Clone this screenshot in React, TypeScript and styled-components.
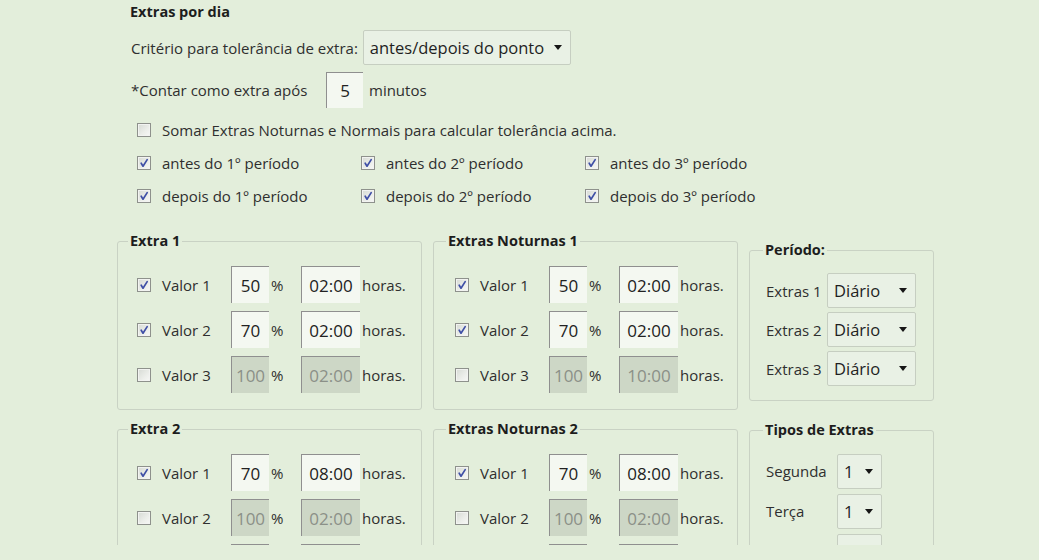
import React from 'react';
import styled, { createGlobalStyle } from 'styled-components';

const GlobalStyle = createGlobalStyle`
  html, body {
    margin: 0;
    padding: 0;
    background: #e3eedb;
  }
  body {
    font-family: "Open Sans", "Noto Sans", sans-serif;
    font-size: 15px;
    color: #2f2f2f;
  }
`;

const Viewport = styled.div`
  height: 545px;
  overflow: hidden;
  padding-left: 117px;
`;

const Title = styled.div`
  height: 24px;
  line-height: 24px;
  padding-left: 13px;
  font-size: 14.5px;
  font-weight: 700;
  color: #1d1d1d;
`;

const FormRow = styled.div<{ $top: number; $height: number }>`
  display: flex;
  align-items: center;
  height: ${(p) => p.$height}px;
  margin-top: ${(p) => p.$top}px;
  padding-left: 14px;
`;

const Caption = styled.span<{ $width?: number }>`
  white-space: nowrap;
  ${(p) => (p.$width ? `width: ${p.$width}px;` : '')}
`;

const DropDown = styled.div<{ $width: number; $left?: number }>`
  box-sizing: border-box;
  display: flex;
  align-items: center;
  justify-content: space-between;
  width: ${(p) => p.$width}px;
  height: 35px;
  margin-left: ${(p) => p.$left ?? 0}px;
  padding: 0 8px 0 6px;
  border: 1px solid #c6cec1;
  border-radius: 2px;
  background: #e9f1e5;
  font-size: 16.5px;
  color: #1f1f1f;
`;

const Arrow = styled.span`
  width: 0;
  height: 0;
  border-left: 4px solid transparent;
  border-right: 4px solid transparent;
  border-top: 5px solid #161616;
`;

const Field = styled.input<{ $width: number; $height: number }>`
  box-sizing: border-box;
  width: ${(p) => p.$width}px;
  height: ${(p) => p.$height}px;
  padding: 0;
  border: none;
  border-top: 1px solid #8f8f8f;
  border-left: 1px solid #8f8f8f;
  background: #f4f8f1;
  font-family: inherit;
  font-size: 17px;
  color: #222;
  text-align: center;
  outline: none;

  &:disabled {
    background: #cdd7c6;
    color: #8b9088;
    -webkit-text-fill-color: #8b9088;
    opacity: 1;
  }
`;

const Minutes = styled.span`
  margin-left: 6px;
`;

const CheckGrid = styled.div`
  display: grid;
  grid-template-columns: repeat(3, 224px);
  grid-auto-rows: 33px;
  margin-top: 5px;
  padding-left: 20px;
`;

const CheckItem = styled.label<{ $full?: boolean }>`
  display: flex;
  align-items: center;
  gap: 11px;
  white-space: nowrap;
  ${(p) => (p.$full ? 'grid-column: 1 / -1;' : '')}
`;

const Box = styled.span`
  box-sizing: border-box;
  display: inline-flex;
  align-items: center;
  justify-content: center;
  flex: none;
  width: 14px;
  height: 14px;
  border: 1px solid #8e918c;
  background: linear-gradient(135deg, #d6dad4 0%, #eceeea 60%, #f7f8f6 100%);
  box-shadow: inset 0 0 0 1px #f2f3f1;
`;

const Groups = styled.div`
  display: grid;
  grid-template-columns: 305px 305px 185px;
  column-gap: 11px;
  row-gap: 9px;
  margin-top: 19px;
  align-items: start;
`;

const Group = styled.fieldset<{ $offset?: number; $indent?: number }>`
  box-sizing: border-box;
  margin: ${(p) => p.$offset ?? 0}px 0 0 0;
  padding: 11px 10px 12px ${(p) => p.$indent ?? 10}px;
  border: 1px solid #c9d2c4;
  border-radius: 3px;
  min-width: 0;
`;

const Legend = styled.legend`
  padding: 0 2px;
  line-height: 20px;
  font-size: 14.5px;
  font-weight: 700;
  color: #1d1d1d;
`;

const ValueRow = styled.div`
  display: flex;
  align-items: center;
  height: 45px;
  padding-left: 9px;
`;

const ValueLabel = styled.span`
  width: 69px;
  margin-left: 11px;
  white-space: nowrap;
`;

const Unit = styled.span`
  width: 30px;
  padding-left: 2px;
`;

const Hours = styled.span`
  margin-left: 2px;
`;

const SideRow = styled.div<{ $height: number }>`
  display: flex;
  align-items: center;
  height: ${(p) => p.$height}px;
  padding-left: 3px;
`;

const Check = ({ checked }: { checked?: boolean }) => (
  <Box>
    {checked && (
      <svg width="10" height="10" viewBox="0 0 10 10">
        <path d="M2.2 5.2 L4 8.2 L8.2 1.6" fill="none" stroke="#3f4fa6" strokeWidth="1.7" strokeLinecap="round" strokeLinejoin="round" />
      </svg>
    )}
  </Box>
);

type Value = { on: boolean; pct: string; time: string };

const ValueGroup = ({ title, values, indent }: { title: string; values: Value[]; indent?: number }) => (
  <Group $indent={indent}>
    <Legend>{title}</Legend>
    {values.map((v, i) => (
      <ValueRow key={i}>
        <Check checked={v.on} />
        <ValueLabel>Valor {i + 1}</ValueLabel>
        <Field $width={38} $height={37} value={v.pct} disabled={!v.on} readOnly />
        <Unit>%</Unit>
        <Field $width={59} $height={37} value={v.time} disabled={!v.on} readOnly />
        <Hours>horas.</Hours>
      </ValueRow>
    ))}
  </Group>
);

const extra1: Value[] = [
  { on: true, pct: '50', time: '02:00' },
  { on: true, pct: '70', time: '02:00' },
  { on: false, pct: '100', time: '02:00' },
];
const noturnas1: Value[] = [
  { on: true, pct: '50', time: '02:00' },
  { on: true, pct: '70', time: '02:00' },
  { on: false, pct: '100', time: '10:00' },
];
const extra2: Value[] = [
  { on: true, pct: '70', time: '08:00' },
  { on: false, pct: '100', time: '02:00' },
  { on: false, pct: '100', time: '02:00' },
];

const periods = ['antes', 'depois'];
const ordinals = ['1º', '2º', '3º'];
const days = ['Segunda', 'Terça', 'Quarta', 'Quinta'];

export default function App() {
  return (
    <>
      <GlobalStyle />
      <Viewport>
        <Title>Extras por dia</Title>
        <FormRow $top={6} $height={35}>
          <Caption>Critério para tolerância de extra:</Caption>
          <DropDown $width={208} $left={5}>
            antes/depois do ponto
            <Arrow />
          </DropDown>
        </FormRow>
        <FormRow $top={7} $height={36}>
          <Caption $width={195}>*Contar como extra após</Caption>
          <Field $width={37} $height={36} value="5" readOnly />
          <Minutes>minutos</Minutes>
        </FormRow>
        <CheckGrid>
          <CheckItem $full>
            <Check />
            Somar Extras Noturnas e Normais para calcular tolerância acima.
          </CheckItem>
          {periods.map((p) =>
            ordinals.map((o) => (
              <CheckItem key={p + o}>
                <Check checked />
                {p} do {o} período
              </CheckItem>
            ))
          )}
        </CheckGrid>
        <Groups>
          <ValueGroup title="Extra 1" values={extra1} />
          <ValueGroup title="Extras Noturnas 1" values={noturnas1} indent={12} />
          <Group $offset={9} $indent={13}>
            <Legend>Período:</Legend>
            {[1, 2, 3].map((n) => (
              <SideRow key={n} $height={39}>
                <Caption $width={61}>Extras {n}</Caption>
                <DropDown $width={89}>
                  Diário
                  <Arrow />
                </DropDown>
              </SideRow>
            ))}
          </Group>
          <ValueGroup title="Extra 2" values={extra2} />
          <ValueGroup title="Extras Noturnas 2" values={extra2} indent={12} />
          <Group $offset={1} $indent={13}>
            <Legend>Tipos de Extras</Legend>
            {days.map((d) => (
              <SideRow key={d} $height={40}>
                <Caption $width={71}>{d}</Caption>
                <DropDown $width={45}>
                  1
                  <Arrow />
                </DropDown>
              </SideRow>
            ))}
          </Group>
        </Groups>
      </Viewport>
    </>
  );
}
